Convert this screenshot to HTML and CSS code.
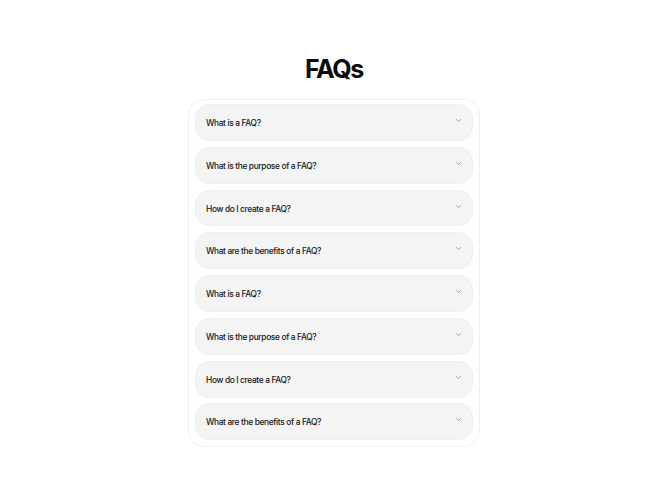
FILE: index.html
```html
<!DOCTYPE html>
<html>
<head>
<meta charset="utf-8">
<link rel="stylesheet" href="styles.css">
</head>
<body>
<main class="page">
  <h1 class="title">FAQs</h1>
  <div class="faq-list">
    <div class="faq-item"><span>What is a FAQ?</span><svg class="chev" viewBox="0 0 10 6"><path d="M1 1l4 4 4-4"/></svg></div>
    <div class="faq-item"><span>What is the purpose of a FAQ?</span><svg class="chev" viewBox="0 0 10 6"><path d="M1 1l4 4 4-4"/></svg></div>
    <div class="faq-item"><span>How do I create a FAQ?</span><svg class="chev" viewBox="0 0 10 6"><path d="M1 1l4 4 4-4"/></svg></div>
    <div class="faq-item"><span>What are the benefits of a FAQ?</span><svg class="chev" viewBox="0 0 10 6"><path d="M1 1l4 4 4-4"/></svg></div>
    <div class="faq-item"><span>What is a FAQ?</span><svg class="chev" viewBox="0 0 10 6"><path d="M1 1l4 4 4-4"/></svg></div>
    <div class="faq-item"><span>What is the purpose of a FAQ?</span><svg class="chev" viewBox="0 0 10 6"><path d="M1 1l4 4 4-4"/></svg></div>
    <div class="faq-item"><span>How do I create a FAQ?</span><svg class="chev" viewBox="0 0 10 6"><path d="M1 1l4 4 4-4"/></svg></div>
    <div class="faq-item"><span>What are the benefits of a FAQ?</span><svg class="chev" viewBox="0 0 10 6"><path d="M1 1l4 4 4-4"/></svg></div>
  </div>
</main>
</body>
</html>
```

FILE: styles.css
```css
html, body {
  margin: 0;
  padding: 0;
  background: #ffffff;
}
body {
  font-family: Inter, "Noto Sans", sans-serif;
  color: #111;
}
.page {
  display: flex;
  flex-direction: column;
  align-items: center;
  padding-top: 51px;
}
.title {
  margin: 0 0 12px 0;
  font-size: 25px;
  line-height: 36px;
  font-weight: 700;
  letter-spacing: -1.35px;
  color: #0a0a0a;
}
.faq-list {
  width: 292px;
  box-sizing: border-box;
  padding: 4px 6px 6px 6px;
  border: 1px solid #f0f0f0;
  border-radius: 16px;
  display: flex;
  flex-direction: column;
  gap: 5.9px;
}
.faq-item {
  display: flex;
  align-items: center;
  justify-content: space-between;
  height: 36.9px;
  box-sizing: border-box;
  padding: 0 11px 0 10px;
  background: #f4f4f4;
  border: 1px solid #efefef;
  border-radius: 14px;
  font-size: 8.4px;
  letter-spacing: -0.36px;
  color: #161616;
  font-weight: 500;
}
.faq-item span {
  margin-top: 1px;
}
.chev {
  width: 5px;
  height: 3px;
  margin-top: -4px;
  fill: none;
  stroke: #8a8a8a;
  stroke-width: 1.5;
  stroke-linecap: round;
  stroke-linejoin: round;
}
```
